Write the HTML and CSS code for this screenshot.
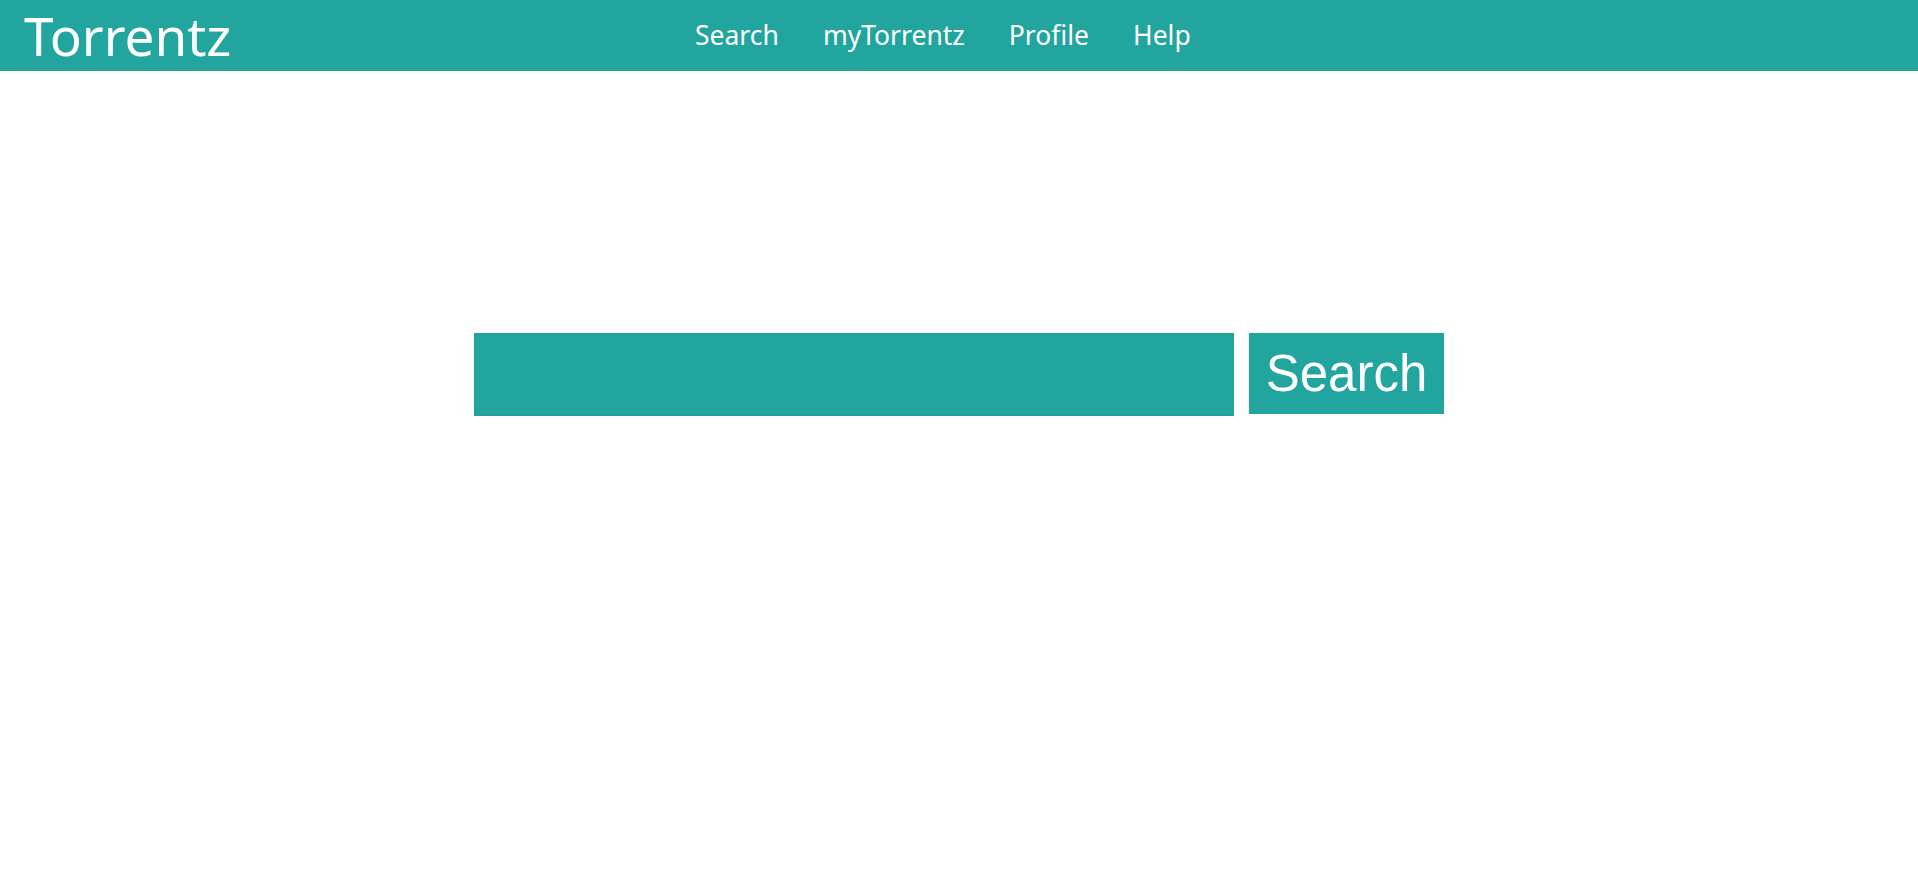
FILE: index.html
```html
<!DOCTYPE html>
<html>
<head>
<meta charset="utf-8">
<title>Torrentz</title>
<link rel="stylesheet" href="styles.css">
</head>
<body>
<header class="topbar">
  <div class="logo">Torrentz</div>
  <nav class="nav">
    <a href="#">Search</a>
    <a href="#">myTorrentz</a>
    <a href="#">Profile</a>
    <a href="#">Help</a>
  </nav>
</header>
<main class="main">
  <form class="search">
    <input class="search-input" type="text">
    <button class="search-btn" type="button">Search</button>
  </form>
</main>
</body>
</html>
```
FILE: styles.css
```css
html, body {
  margin: 0;
  padding: 0;
  background: #ffffff;
}
.topbar {
  height: 71px;
  background: #22a59f;
  display: flex;
  align-items: center;
  color: #ffffff;
  font-family: "Noto Sans", sans-serif;
}
.logo {
  font-size: 53px;
  line-height: 70px;
  padding-left: 24px;
  width: 645px;
  box-sizing: border-box;
}
.nav {
  display: flex;
  gap: 44px;
  padding-left: 50px;
  margin-top: -2px;
}
.nav a {
  color: #ffffff;
  text-decoration: none;
  font-size: 26.5px;
  line-height: 32px;
}
.main {
  display: flex;
  justify-content: center;
  padding-top: 262px;
}
.search {
  display: flex;
  gap: 15px;
  margin: 0;
}
.search-input {
  width: 760px;
  height: 83px;
  box-sizing: border-box;
  border: 1px solid #2a9a94;
  background: #22a59f;
  margin: 0;
  padding: 0 12px;
  outline: none;
}
.search-btn {
  width: 195px;
  height: 81px;
  border: none;
  background: #22a59f;
  color: #ffffff;
  font-family: "Liberation Sans", Arial, sans-serif;
  font-size: 51px;
  padding: 0;
  margin: 0;
}
```
